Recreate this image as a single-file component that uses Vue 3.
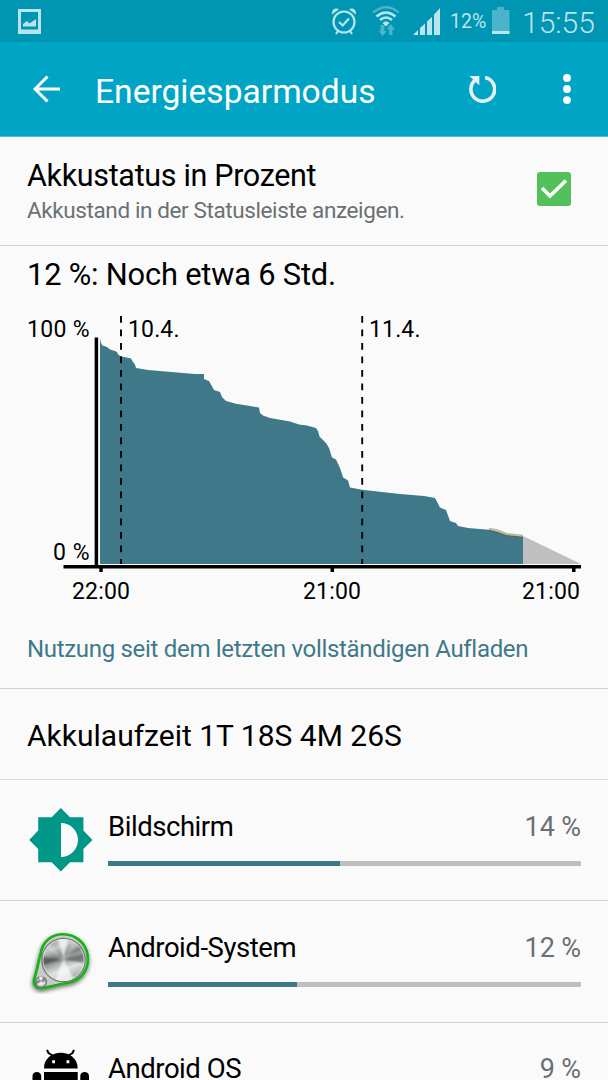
<template>
  <main class="screen">
    <header class="status-bar">
      <svg class="picture-icon" viewBox="0 0 24 26">
        <path fill-rule="evenodd" d="M0 0H23V25H0ZM3 3V20.5H20V3Z" />
        <path d="M5 17.5V15L9 12L11.5 14.5L18 10V17.5Z" />
      </svg>
      <div class="status-icons">
        <svg class="alarm-icon" viewBox="0 0 26 28">
          <g fill="none" stroke="#b9e5ed" stroke-width="2.2">
            <circle cx="13" cy="15" r="10.5" />
            <path d="M8 15L11.7 18.5L18 11.5M7 24L5 27M19 24L21 27" />
          </g>
          <path d="M1 7.5C.2 2 5 .2 8 2.2ZM25 7.5C25.8 2 21 .2 18 2.2Z" />
        </svg>
        <svg class="wifi-icon" viewBox="0 0 28 30">
          <g fill="none" stroke="#b9e5ed" stroke-width="2.5">
            <path stroke="#4bb4ca" d="M1 6.6Q14 -4 27 6.6" />
            <path d="M4.5 10.5Q14 2.5 23.5 10.5M8 14Q14 9 20 14" />
          </g>
          <path d="M10.5 17Q14 14.2 17.5 17L14 20.5Z" />
          <path fill="#4bb4ca" d="M8.5 19H12.5V25H15L10.5 30L7 25H8.5ZM17 29V23.5H14.5L18.7 18L23 23.5H20.5V29Z" />
        </svg>
        <svg class="signal-icon" viewBox="0 0 28 28">
          <path d="M0 27L5 22V27ZM7 27V20L12 15.5V27ZM14 27V13.5L19 9V27ZM21 27V6.5L27 0V27Z" />
        </svg>
        <span class="status-percent">12%</span>
        <svg class="battery-icon" viewBox="0 0 18 28">
          <path fill="#4bb4ca" d="M0 3H5V0H12V3H17.5V27H0Z" />
          <path d="M0 24H17.5V27H0Z" />
        </svg>
        <span class="clock">15:55</span>
      </div>
    </header>

    <nav class="app-bar">
      <svg class="back-icon" viewBox="0 0 28 28">
        <path d="M14.5 1.5L2 14L14.5 26.5M2.5 14H27" fill="none" stroke="#fff" stroke-width="3" />
      </svg>
      <h1>Energiesparmodus</h1>
      <svg class="refresh-icon" viewBox="0 0 28 28">
        <path d="M7.6 4.8A11.9 11.9 0 1 0 17.1 2.6" fill="none" stroke="#e9eff1" stroke-width="3.6" />
        <path d="M1.5 1H11.3V10.5Z" fill="#e9eff1" />
      </svg>
      <svg class="menu-icon" viewBox="0 0 8 30">
        <circle cx="4" cy="3.9" r="3.9" />
        <circle cx="4" cy="15" r="3.9" />
        <circle cx="4" cy="26.1" r="3.9" />
      </svg>
    </nav>

    <section class="setting-row">
      <div>
        <h2>Akkustatus in Prozent</h2>
        <p>Akkustand in der Statusleiste anzeigen.</p>
      </div>
      <svg class="checkbox" viewBox="0 0 34 34">
        <rect width="34" height="34" rx="3" fill="#53c15a" />
        <path d="M5 16L13 24L29 8.5" fill="none" stroke="#fff" stroke-width="3.6" />
      </svg>
    </section>

    <section class="battery-section">
      <h2>12 %: Noch etwa 6 Std.</h2>
      <svg class="chart" viewBox="0 300 608 310">
        <path d="M99 338V564.5H581" fill="none" stroke="#fff" stroke-width="2" />
        <path d="M523 536L581 564H523Z" fill="#bfbfbf" />
        <polygon :points="levelPoints" fill="#3f7989" />
        <path d="M489 530L497 531.5L506 535L523 537" fill="none" stroke="#b9bba9" stroke-width="2.5" transform="translate(0 -1)" />
        <path d="M489 530.5L497 532.5L506 535.7L523 537.3" fill="none" stroke="#5b6650" stroke-width="1.3" />
        <path d="M96.4 337.5V567M63.5 566.8H581" fill="none" stroke="#000" stroke-width="3.5" />
        <path d="M101 567V572M332.3 567V572M573.8 567V572" stroke="#000" stroke-width="3.5" />
        <path d="M121 316V564M362.2 316V564" stroke="#000" stroke-width="1.9" stroke-dasharray="6.8 6.7" />
        <text v-for="label in chartLabels" :key="label.x" :x="label.x" :y="label.y" :textLength="label.width">{{ label.text }}</text>
      </svg>
      <p class="usage">Nutzung seit dem letzten vollständigen Aufladen</p>
    </section>

    <section class="runtime">Akkulaufzeit 1T 18S 4M 26S</section>

    <article v-for="item in items" :key="item.name" class="usage-row">
      <svg v-if="item.icon === 'display'" class="app-icon" viewBox="28 807 66 66">
        <path d="M60.8 808L70 817.2H83.4V830.6L92.5 840L83.4 849V862.3H70L60.8 871.5L51.7 862.3H38.2V849L29.2 840L38.2 830.6V817.2H51.7Z" fill="#009688" />
        <path d="M61 823A17 17 0 0 1 61 857Z" fill="#fafafa" />
      </svg>
      <svg v-else-if="item.icon === 'system'" class="app-icon" viewBox="28 927.5 66 66">
        <defs>
          <linearGradient id="metal" x1="0" y1="0" x2=".4" y2="1">
            <stop offset="0" stop-color="#8b8f8e" />
            <stop offset=".3" stop-color="#c4c7c6" />
            <stop offset=".5" stop-color="#7c8280" />
            <stop offset=".8" stop-color="#e2e3e3" />
            <stop offset="1" stop-color="#b4b6b5" />
          </linearGradient>
          <filter id="iconShadow" x="-20%" y="-20%" width="140%" height="150%">
            <feDropShadow dx="-.3" dy="1.8" stdDeviation="2" flood-opacity=".6" />
          </filter>
          <filter id="soften" x="-10%" y="-10%" width="120%" height="120%">
            <feGaussianBlur stdDeviation="1.1" />
          </filter>
          <clipPath id="dial"><circle cx="63.5" cy="959.5" r="21" /></clipPath>
        </defs>
        <path d="M40.5 954C44 926 83 928 87.5 954C90 969 81 979 70 982C59 983.5 51 986 42 988C36 988 33 983.5 34 979C37 971 38 962 40.5 954Z" fill="#c8cbc9" stroke="#18b317" stroke-width="2.7" filter="url(#iconShadow)" />
        <circle cx="63.5" cy="959.5" r="21.7" fill="url(#metal)" stroke="#777978" stroke-width="1.3" />
        <g clip-path="url(#dial)">
          <g filter="url(#soften)">
            <path d="M63.5 959L40 956V965Z" fill="#3f4543" opacity=".6" />
            <path d="M63.5 959L87 952V963Z" fill="#3f4543" opacity=".6" />
            <path d="M63.5 959L57 936H69ZM63.5 959L53 985H77Z" fill="#fff" opacity=".7" />
            <path d="M63.5 959L74 938L80 944ZM63.5 959L44 946L48 941Z" fill="#fff" opacity=".25" />
          </g>
        </g>
        <circle cx="63.5" cy="959.5" r="20.5" fill="none" stroke="#f1f1f1" stroke-width="1" opacity=".65" />
        <circle cx="41" cy="981.5" r="5.4" fill="url(#metal)" stroke="#737675" stroke-width="1.4" />
        <path d="M41 981L37 984H45ZM41 981L39 976H43Z" fill="#eee" />
      </svg>
      <svg v-else class="app-icon" viewBox="28 1049 66 66">
        <path d="M44 1068.5C44 1047.5 77.7 1047.5 77.7 1068.5ZM44 1072H77.7V1100H44ZM32.5 1076C32.5 1070.5 41.2 1070.5 41.2 1076V1096H32.5ZM80.3 1076C80.3 1070.5 89 1070.5 89 1076V1096H80.3Z" />
        <path d="M47 1049.8L48.5 1053L52.5 1055.5M74 1049.8L72.5 1053L68.5 1055.5" fill="none" stroke="#000" stroke-width="2" />
        <path d="M52.2 1060.2H55V1063.3H52.2ZM66.5 1060.2H69.3V1063.3H66.5Z" fill="#fff" />
      </svg>
      <div class="usage-info">
        <div class="usage-title">
          <span>{{ item.name }}</span>
          <span class="percent">{{ item.percent }} %</span>
        </div>
        <div class="track">
          <div class="bar" :style="{ width: item.width + 'px' }"></div>
        </div>
      </div>
    </article>
  </main>
</template>

<script setup>
const levelPoints = '100,338 101,343 102.5,345.5 107,347 110,349.5 115,351 117,352 118.5,355 122,356.5 131,358.5 133,362 135,364.5 136,368 148,370 195,374 204,374 204,379 209,381 214,390 220,392 222,397 226,401 236,403.7 259,407.5 260,413 263,415.5 270,418 290,421.5 299,424.5 307,425.5 316,428 318,431 319.5,436.5 326,443 329,448 332,457.5 336,459.5 340,468 343.2,477.5 348,480.5 350,487.5 362,489.8 400,494 424,496 435,498 440,507.5 446,510 450,521 456,523 458,526 468,528 489,529.7 497,531.5 506,535 523,536.5 523,564 100,564'

const chartLabels = [
  { text: '100 %', x: 27, y: 337.3, width: 62.5 },
  { text: '10.4.', x: 128, y: 337.3, width: 51.5 },
  { text: '11.4.', x: 369, y: 337.3, width: 51.5 },
  { text: '0 %', x: 53, y: 559.8, width: 36.5 },
  { text: '22:00', x: 72, y: 598.5, width: 58 },
  { text: '21:00', x: 303, y: 598.5, width: 58 },
  { text: '21:00', x: 522, y: 598.5, width: 58 },
]

const items = [
  { name: 'Bildschirm', percent: 14, width: 232, icon: 'display' },
  { name: 'Android-System', percent: 12, width: 189, icon: 'system' },
  { name: 'Android OS', percent: 9, width: 142, icon: 'android' },
]
</script>

<style>
body {
  overflow: hidden;
}
</style>

<style scoped>
.screen {
  width: 608px;
  height: 1080px;
  overflow: hidden;
  background: #fafafa;
  color: #000;
  font-family: Roboto, sans-serif;
}

.screen * {
  box-sizing: border-box;
}

svg {
  display: block;
  flex-shrink: 0;
}

h1,
h2,
p {
  margin: 0;
  font-weight: 400;
  white-space: nowrap;
}

.status-bar {
  display: flex;
  justify-content: space-between;
  height: 42px;
  padding: 0 14px 0 18px;
  background: #0095b3;
  color: #b9e5ed;
  fill: #b9e5ed;
}

.picture-icon {
  width: 24px;
  height: 26px;
  margin-top: 9px;
}

.status-icons {
  display: flex;
  align-items: flex-start;
}

.alarm-icon {
  width: 26px;
  height: 28px;
  margin: 7px 15px 0 0;
}

.wifi-icon {
  width: 28px;
  height: 30px;
  margin: 6px 13px 0 0;
}

.signal-icon {
  width: 28px;
  height: 28px;
  margin: 8px 9px 0 0;
}

.status-percent {
  width: 42px;
  font-size: 19.5px;
  line-height: 44px;
}

.battery-icon {
  width: 18px;
  height: 28px;
  margin-top: 7px;
}

.clock {
  width: 72px;
  margin-left: 12px;
  font-size: 30px;
  font-weight: 300;
  line-height: 45px;
  white-space: nowrap;
}

.app-bar {
  display: flex;
  align-items: center;
  height: 95px;
  padding: 0 37px 0 33px;
  border-bottom: 1px solid #4dbdd3;
  background: #00a5c6;
  color: #fff;
}

.back-icon {
  width: 28px;
  height: 28px;
}

.app-bar h1 {
  flex: 1;
  margin-left: 34px;
  padding-top: 4px;
  font-size: 33.6px;
}

.refresh-icon {
  width: 28px;
  height: 28px;
  margin-right: 67px;
}

.menu-icon {
  width: 8px;
  height: 30px;
  fill: #fff;
}

.setting-row {
  display: flex;
  align-items: center;
  justify-content: space-between;
  height: 109px;
  padding: 0 37px 4px 27px;
  border-bottom: 1px solid #d2d2d2;
}

.setting-row h2 {
  padding-top: 4px;
  font-size: 30.5px;
  letter-spacing: -0.33px;
  line-height: 38px;
}

.setting-row p {
  color: #6b7072;
  font-size: 22.5px;
  letter-spacing: -0.39px;
  line-height: 31px;
}

.checkbox {
  width: 34px;
  height: 34px;
}

.battery-section {
  height: 443px;
  border-bottom: 1px solid #d2d2d2;
}

.battery-section h2 {
  height: 54px;
  padding-left: 27px;
  font-size: 30.8px;
  letter-spacing: -0.18px;
  line-height: 57px;
}

.chart {
  width: 608px;
  height: 310px;
  font-size: 23px;
}

.usage {
  padding-left: 27px;
  color: #3f7989;
  font-size: 24px;
  letter-spacing: -0.31px;
  line-height: 79px;
}

.runtime {
  height: 91px;
  padding-left: 27px;
  border-bottom: 1px solid #dadada;
  font-size: 30px;
  line-height: 93px;
}

.usage-row {
  display: flex;
  height: 121px;
  padding: 27px 27px 0 28px;
  border-bottom: 1px solid #d2d2d2;
}

.usage-row + .usage-row {
  height: 122px;
}

.usage-row:last-child {
  padding-top: 26px;
}

.app-icon {
  width: 66px;
  height: 66px;
}

.usage-info {
  flex: 1;
  margin-left: 14px;
}

.usage-title {
  display: flex;
  justify-content: space-between;
  height: 54px;
  font-size: 27.5px;
  letter-spacing: -0.45px;
  line-height: 40px;
}

.percent {
  color: #6b7072;
  font-size: 27px;
  letter-spacing: -0.1px;
}

.track {
  height: 5px;
  background: #bfbfbf;
}

.bar {
  height: 5px;
  background: #3f7989;
}
</style>
